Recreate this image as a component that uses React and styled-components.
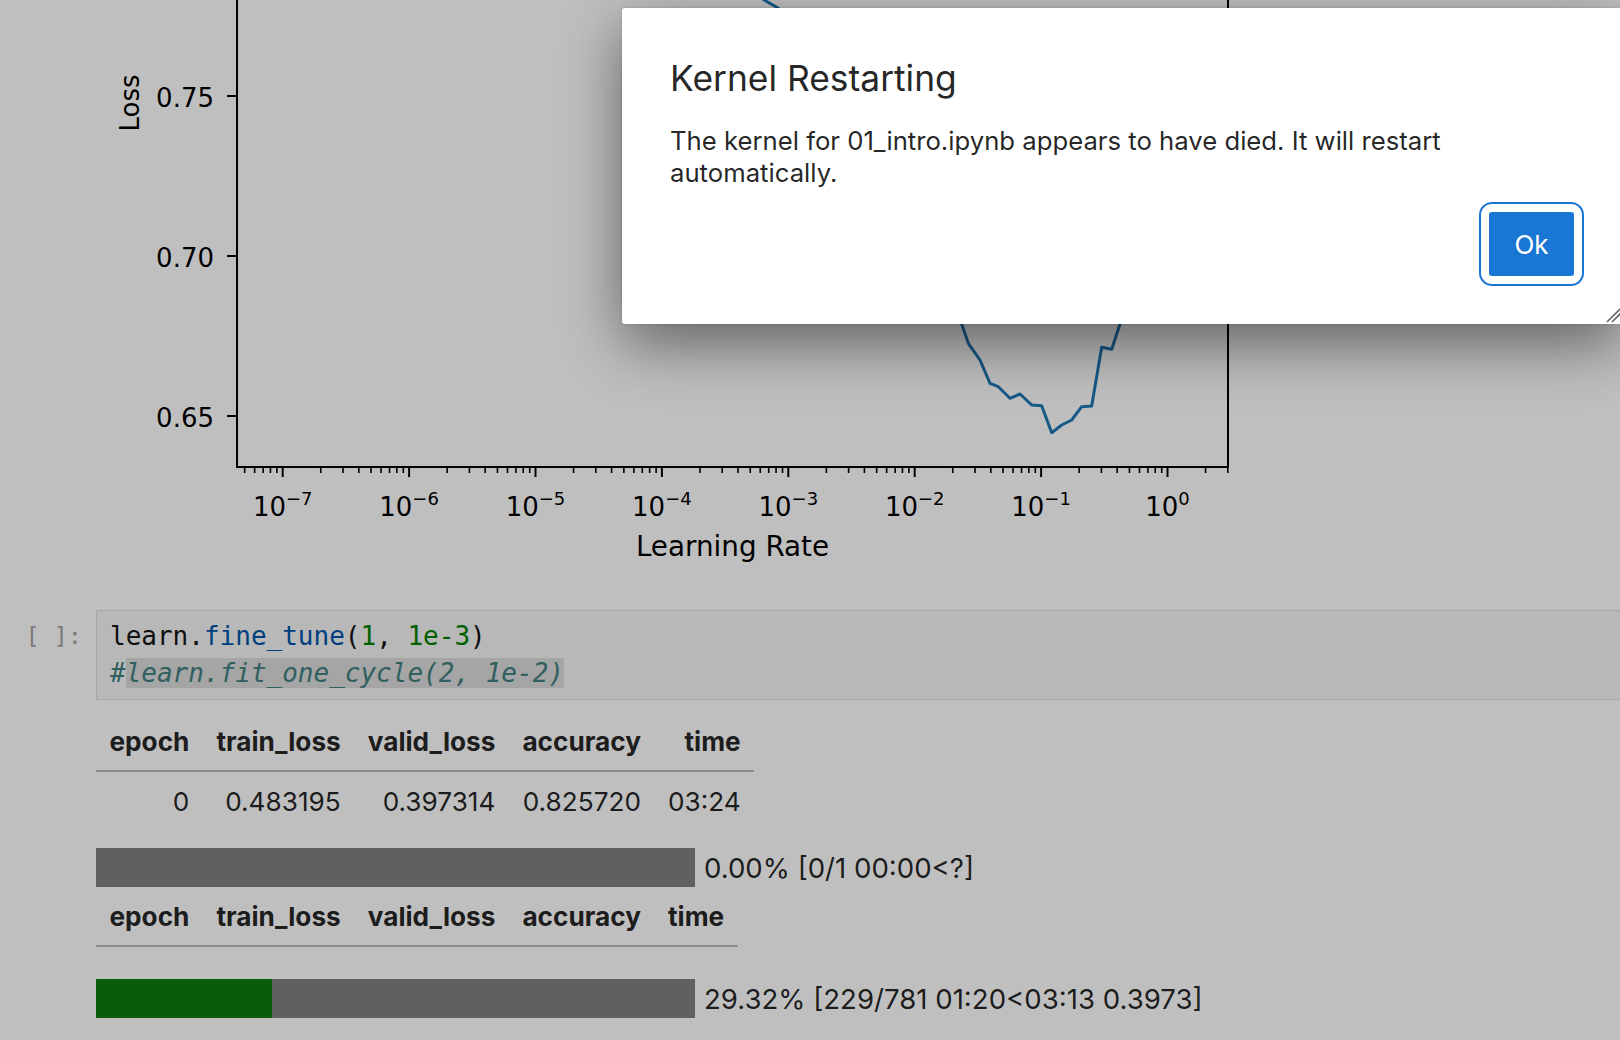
import React from 'react'
import styled, { createGlobalStyle } from 'styled-components'

const uiFont = `Inter, "Liberation Sans", sans-serif`
const codeFont = `"DejaVu Sans Mono", "Liberation Mono", monospace`
const plotFont = `"DejaVu Sans", "Liberation Sans", sans-serif`

const GlobalStyle = createGlobalStyle`
  html, body {
    margin: 0;
    padding: 0;
    background: #ffffff;
    overflow: hidden;
  }
`

const Page = styled.div`
  position: relative;
  width: 1620px;
  height: 1040px;
  overflow: hidden;
  background: #ffffff;
  font-family: ${uiFont};
`

const Notebook = styled.main`
  display: flex;
  flex-direction: column;
  width: 1720px;
`

const CellRow = styled.div`
  display: flex;
  align-items: flex-start;
  margin-top: ${p => p.$gap || 0}px;
`

const Prompt = styled.div`
  flex: 0 0 96px;
  box-sizing: border-box;
  padding: 8px 14px 0 0;
  text-align: right;
  font-family: ${codeFont};
  font-size: 23.5px;
  line-height: 37px;
  color: #a4a4a4;
  white-space: pre;
`

const Editor = styled.div`
  flex: 1;
  border: 1px solid #e0e0e0;
  background: #f6f6f6;
  padding: 7px 13px;
  font-family: ${codeFont};
  font-size: 26px;
  line-height: 37px;
  white-space: pre;
  color: #141414;
`

const CodeLine = styled.div``

const tokenColors = {
  plain: '#141414',
  prop: '#0055aa',
  num: '#008000',
  comment: '#408080',
}

const Tok = styled.span`
  color: ${p => tokenColors[p.$k || 'plain']};
  font-style: ${p => (p.$k === 'comment' ? 'italic' : 'normal')};
  background: ${p => (p.$hl ? '#dcdcdc' : 'transparent')};
`

const OutputBody = styled.div`
  display: flex;
  flex-direction: column;
  align-items: flex-start;
`

const Table = styled.table`
  border-collapse: collapse;
  border-spacing: 0;
  font-size: 26.2px;
  color: rgba(0, 0, 0, 0.87);
  margin-top: ${p => p.$gap || 0}px;

  th,
  td {
    padding: 13.5px;
    text-align: right;
    line-height: 31px;
    white-space: nowrap;
  }

  th {
    font-weight: 700;
  }

  thead {
    border-bottom: 2px solid #bdbdbd;
  }
`

const ProgressRow = styled.div`
  display: flex;
  align-items: center;
  gap: 9px;
  margin-top: ${p => p.$gap || 0}px;
  font-size: 27.6px;
  color: rgba(0, 0, 0, 0.87);
  white-space: nowrap;
`

const Track = styled.div`
  display: flex;
  width: 599px;
  height: 39px;
  background: #808080;
`

const Fill = styled.div`
  height: 100%;
  background: #0e7a0e;
`

const Backdrop = styled.div`
  position: absolute;
  inset: 0;
  background: rgba(0, 0, 0, 0.25);
`

const Dialog = styled.section`
  position: absolute;
  left: 622px;
  top: 8px;
  width: 1000px;
  box-sizing: border-box;
  padding: 49px 48px 48px;
  display: flex;
  flex-direction: column;
  background: #ffffff;
  border-radius: 3px;
  box-shadow: 0 20px 60px rgba(0, 0, 0, 0.48), 0 0 3px rgba(0, 0, 0, 0.15);
  color: rgba(0, 0, 0, 0.87);
`

const DialogTitle = styled.h2`
  margin: 0;
  font-size: 35.4px;
  font-weight: 400;
  line-height: 44px;
`

const DialogBody = styled.p`
  margin: 24px 0 0;
  font-size: 25.7px;
  line-height: 32px;
`

const DialogFooter = styled.div`
  display: flex;
  justify-content: flex-end;
  margin-top: 23px;
`

const OkButton = styled.button`
  width: 85px;
  height: 64px;
  border: none;
  border-radius: 3px;
  background: #1976d2;
  color: #ffffff;
  font-family: ${uiFont};
  font-size: 26px;
  outline: 2px solid #1976d2;
  outline-offset: 8px;
  padding: 0;
`

const ResizeHandle = styled.svg`
  position: absolute;
  right: 0;
  bottom: 1px;
  width: 18px;
  height: 18px;
`

const PlotSvg = styled.svg`
  display: block;
  flex: 0 0 auto;
`

/* lr_find chart, drawn in page coordinates */
const D = 126.4
const X0 = 282.7
const xOf = e => X0 + (e + 7) * D
const AX = { left: 237, right: 1228, top: -40, bottom: 467 }

const majorX = [-7, -6, -5, -4, -3, -2, -1, 0]
const minorX = []
for (let e = -8; e <= 0; e++) {
  for (let m = 2; m <= 9; m++) {
    const x = xOf(e + Math.log10(m))
    if (x > AX.left && x < AX.right) minorX.push(x)
  }
}
const yTicks = [
  { y: 96, label: '0.75' },
  { y: 256, label: '0.70' },
  { y: 416, label: '0.65' },
]

// the run stops once the loss blows up, so the right branch ends under the dialog
const curve = [
  [600, -140], [680, -90], [730, -45], [752, -16], [764, 0], [778, 8],
  [800, 36], [830, 92], [870, 172], [910, 250], [940, 296], [955, 313],
  [961.7, 324], [968.3, 343.3], [980, 360], [990, 383.3], [998.3, 386.7],
  [1010, 398.3], [1020, 394], [1031.7, 405], [1041.7, 405.7], [1051.7, 432.7],
  [1061.7, 425], [1071.7, 420], [1081.7, 406.7], [1091.7, 406], [1101.7, 347.3],
  [1111.7, 349.3], [1120, 324], [1128, 290], [1138, 250], [1146, 170], [1152, 120],
]

function LrPlot() {
  const path = curve.map((p, i) => `${i ? 'L' : 'M'}${p[0]} ${p[1]}`).join(' ')
  return (
    <PlotSvg width="1164" height="590" viewBox="96 0 1164 590">
      <defs>
        <clipPath id="axclip">
          <rect x={AX.left} y={AX.top} width={AX.right - AX.left} height={AX.bottom - AX.top} />
        </clipPath>
      </defs>
      <path d={path} fill="none" stroke="#1f77b4" strokeWidth="3" strokeLinejoin="round" clipPath="url(#axclip)" />
      <g stroke="#000" fill="none">
        <path d={`M${AX.left} ${AX.top} V${AX.bottom} H${AX.right} V${AX.top}`} strokeWidth="2" />
        {yTicks.map(t => (
          <line key={t.label} x1={AX.left - 10} x2={AX.left} y1={t.y} y2={t.y} strokeWidth="2" />
        ))}
        {majorX.map(e => (
          <line key={e} x1={xOf(e)} x2={xOf(e)} y1={AX.bottom} y2={AX.bottom + 10} strokeWidth="2" />
        ))}
        {minorX.map((x, i) => (
          <line key={i} x1={x} x2={x} y1={AX.bottom} y2={AX.bottom + 6} strokeWidth="1.6" />
        ))}
      </g>
      <g fontFamily={plotFont} fontSize="26" fill="#000">
        {yTicks.map(t => (
          <text key={t.label} x="214" y={t.y + 10.5} textAnchor="end">{t.label}</text>
        ))}
        {majorX.map(e => (
          <text key={e} x={xOf(e)} y="516" textAnchor="middle">
            10<tspan fontSize="18" dy="-11">{e < 0 ? `\u2212${-e}` : `${e}`}</tspan>
          </text>
        ))}
        <text x="732.5" y="556" textAnchor="middle" fontSize="27.8">Learning Rate</text>
        <text transform="translate(139 103) rotate(-90)" textAnchor="middle">Loss</text>
      </g>
    </PlotSvg>
  )
}

function Progress({ pct, label, gap }) {
  return (
    <ProgressRow $gap={gap}>
      <Track>
        <Fill style={{ width: `${pct}%` }} />
      </Track>
      <span>{label}</span>
    </ProgressRow>
  )
}

const columns = ['epoch', 'train_loss', 'valid_loss', 'accuracy', 'time']

function MetricsTable({ rows, gap }) {
  return (
    <Table $gap={gap}>
      <thead>
        <tr>
          {columns.map(c => (
            <th key={c}>{c}</th>
          ))}
        </tr>
      </thead>
      <tbody>
        {rows.map((r, i) => (
          <tr key={i}>
            {r.map((v, j) => (
              <td key={j}>{v}</td>
            ))}
          </tr>
        ))}
      </tbody>
    </Table>
  )
}

export default function App() {
  return (
    <Page>
      <GlobalStyle />
      <Notebook>
        <CellRow>
          <Prompt />
          <LrPlot />
        </CellRow>
        <CellRow $gap={20}>
          <Prompt>[ ]:</Prompt>
          <Editor>
            <CodeLine>
              <Tok>learn.</Tok>
              <Tok $k="prop">fine_tune</Tok>
              <Tok>(</Tok>
              <Tok $k="num">1</Tok>
              <Tok>, </Tok>
              <Tok $k="num">1e-3</Tok>
              <Tok>)</Tok>
            </CodeLine>
            <CodeLine>
              <Tok $k="comment">#</Tok>
              <Tok $k="comment" $hl>learn.fit_one_cycle(2, 1e-2)</Tok>
            </CodeLine>
          </Editor>
        </CellRow>
        <CellRow>
          <Prompt />
          <OutputBody>
            <MetricsTable gap={12} rows={[['0', '0.483195', '0.397314', '0.825720', '03:24']]} />
            <Progress gap={18} pct={0} label="0.00% [0/1 00:00<?]" />
            <MetricsTable rows={[]} />
            <Progress gap={32} pct={29.32} label="29.32% [229/781 01:20<03:13 0.3973]" />
          </OutputBody>
        </CellRow>
      </Notebook>
      <Backdrop />
      <Dialog role="dialog">
        <DialogTitle>Kernel Restarting</DialogTitle>
        <DialogBody>
          The kernel for 01_intro.ipynb appears to have died. It will restart automatically.
        </DialogBody>
        <DialogFooter>
          <OkButton>Ok</OkButton>
        </DialogFooter>
        <ResizeHandle viewBox="0 0 18 18">
          <path d="M3 17 L16 4 M8 17 L17 8" stroke="#666" strokeWidth="1.6" fill="none" />
        </ResizeHandle>
      </Dialog>
    </Page>
  )
}
